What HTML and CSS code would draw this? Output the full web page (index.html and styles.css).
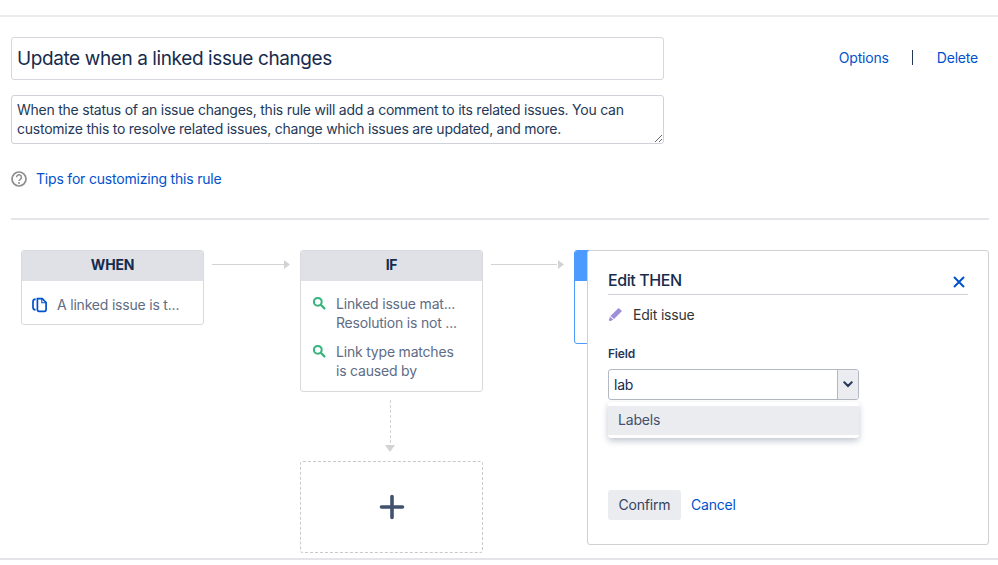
FILE: index.html
```html
<!DOCTYPE html>
<html lang="en">
<head>
<meta charset="utf-8">
<title>Update when a linked issue changes</title>
<link rel="stylesheet" href="styles.css">
</head>
<body>
<header class="head">
  <div class="head-fields">
    <input class="title-input" value="Update when a linked issue changes" readonly>
    <textarea class="desc-input" readonly>When the status of an issue changes, this rule will add a comment to its related issues. You can customize this to resolve related issues, change which issues are updated, and more.</textarea>
  </div>
  <nav class="head-actions">
    <a class="link">Options</a>
    <span class="sep"></span>
    <a class="link">Delete</a>
  </nav>
</header>
<div class="tips">
  <svg class="tips-icon" width="16" height="16" viewBox="0 0 16 16"><circle cx="8" cy="8" r="7" fill="none" stroke="#8d8d8d" stroke-width="1.7"/><path d="M5.6 6.3a2.4 2.4 0 1 1 3.7 2c-.9.6-1.3 1-1.3 1.8" fill="none" stroke="#8d8d8d" stroke-width="1.5"/><circle cx="8" cy="12" r="1" fill="#8d8d8d"/></svg>
  <a class="link">Tips for customizing this rule</a>
</div>
<main class="canvas">
  <section class="node node-when">
    <h3 class="node-head">WHEN</h3>
    <div class="node-row">
      <svg class="when-icon" width="16" height="16" viewBox="0 0 16 16"><path d="M3.6 2.2C2 2.4 1 3.2 1 4.6v5.8c0 1.4 1 2.2 2.6 2.4" fill="none" stroke="#0052cc" stroke-width="1.7"/><path d="M5.4 1.6h4.8l3.9 3.9v7.1c0 1-.7 1.7-1.7 1.7H7.1c-1 0-1.7-.7-1.7-1.7z" fill="none" stroke="#0052cc" stroke-width="1.7"/><path d="M9.8 1.4v4.3h4.4" fill="none" stroke="#0052cc" stroke-width="1.1"/></svg>
      <span>A linked issue is t...</span>
    </div>
  </section>
  <svg class="arrow arrow-a" width="80" height="10" viewBox="0 0 80 10"><path d="M0 4.5h72" stroke="#d3d3d3" stroke-width="1"/><path d="M72 0l6 4.5-6 4.5z" fill="#d3d3d3"/></svg>
  <section class="node node-if">
    <h3 class="node-head">IF</h3>
    <div class="cond">
      <svg width="14" height="14" viewBox="0 0 14 14"><circle cx="5.8" cy="5.8" r="3.9" fill="none" stroke="#36b37e" stroke-width="2"/><path d="M8.8 8.8l3.6 3.6" stroke="#36b37e" stroke-width="2.2" stroke-linecap="round"/></svg>
      <p>Linked issue mat...<br>Resolution is not ...</p>
    </div>
    <div class="cond">
      <svg width="14" height="14" viewBox="0 0 14 14"><circle cx="5.8" cy="5.8" r="3.9" fill="none" stroke="#36b37e" stroke-width="2"/><path d="M8.8 8.8l3.6 3.6" stroke="#36b37e" stroke-width="2.2" stroke-linecap="round"/></svg>
      <p>Link type matches<br>is caused by</p>
    </div>
  </section>
  <svg class="arrow arrow-b" width="80" height="10" viewBox="0 0 80 10"><path d="M0 4.5h66" stroke="#d3d3d3" stroke-width="1"/><path d="M67 0l6 4.5-6 4.5z" fill="#d3d3d3"/></svg>
  <section class="node node-then"><div class="then-bar"></div></section>
  <svg class="arrow-down" width="12" height="54" viewBox="0 0 12 54"><path d="M5.5 0v44" stroke="#d3d3d3" stroke-width="1" stroke-dasharray="3 2"/><path d="M0 45h10l-5 7z" fill="#d3d3d3"/></svg>
  <button class="add-node"><svg width="26" height="26" viewBox="0 0 26 26"><path d="M13 2.5v21M2.5 13h21" stroke="#42526e" stroke-width="3.6" stroke-linecap="round"/></svg></button>
  <aside class="panel">
    <div class="panel-title">
      <h2>Edit THEN</h2>
      <svg class="close" width="12" height="12" viewBox="0 0 12 12"><path d="M1 1l10 10M11 1L1 11" stroke="#0052cc" stroke-width="2"/></svg>
    </div>
    <div class="panel-sub">
      <svg class="pencil" width="15" height="15" viewBox="0 0 15 15"><path d="M10.6.9l3.4 3-7.9 8.2-3.7-3.2z" fill="#9f8fdb"/><path d="M1.9 9.7l3.5 3-3 1.3c-.8.3-1.6-.4-1.4-1.2z" fill="#9f8fdb"/></svg>
      <span>Edit issue</span>
    </div>
    <label class="field-label">Field</label>
    <div class="select">
      <span class="select-value">lab</span>
      <span class="select-btn"><svg width="10" height="7" viewBox="0 0 10 7"><path d="M1.3 1.3L5 5l3.7-3.7" fill="none" stroke="#253858" stroke-width="2" stroke-linecap="round"/></svg></span>
      <div class="menu"><div class="menu-item">Labels</div></div>
    </div>
    <div class="panel-actions">
      <button class="btn">Confirm</button>
      <a class="link cancel">Cancel</a>
    </div>
  </aside>
</main>
<footer class="foot"></footer>
</body>
</html>
```
FILE: styles.css
```css
* { box-sizing: border-box; }
html, body { margin: 0; padding: 0; }
body {
  width: 998px;
  height: 565px;
  overflow: hidden;
  background: #fff;
  color: #172b4d;
  font-family: Inter, "Liberation Sans", sans-serif;
  font-size: 14px;
  letter-spacing: -.2px;
  line-height: 19px;
  padding-top: 15px;
}
.link { color: #0052cc; font-size: 14px; }
.head {
  display: flex;
  justify-content: space-between;
  border-top: 2px solid #ebecf0;
  padding: 20px 20px 0 11px;
}
.head-fields { display: flex; flex-direction: column; gap: 15px; width: 653px; }
.title-input {
  display: block;
  width: 100%;
  height: 43px;
  padding: 0 5px 1px;
  border: 1.5px solid #d5d7de;
  border-radius: 3px;
  font: 19px/28px Inter, "Liberation Sans", sans-serif;
  letter-spacing: -.4px;
  color: #172b4d;
  outline: none;
}
.desc-input {
  display: block;
  width: 100%;
  height: 49px;
  padding: 4px 5px;
  border: 1.5px solid #cfd1dc;
  border-radius: 3px;
  font: 14px/19px Inter, "Liberation Sans", sans-serif;
  letter-spacing: -.24px;
  color: #253858;
  outline: none;
  resize: vertical;
  overflow: hidden;
}
.head-actions { display: flex; align-items: center; gap: 23px; height: 24px; margin-top: 8px; }
.sep { width: 1px; height: 15px; margin-right: 1px; background: #253858; }
.tips { display: flex; align-items: center; gap: 9px; margin: 25px 0 0 11px; height: 19px; }
.canvas {
  position: relative;
  height: 340px;
  margin: 30px 9px 0 11px;
  border-top: 2px solid #e4e5e8;
}
.node {
  position: absolute;
  width: 183px;
  background: #fff;
  border: 1px solid #d9dadd;
  border-radius: 3px;
  overflow: hidden;
}
.node-when { left: 10px; top: 30px; height: 75px; }
.node-if { left: 289px; top: 30px; height: 142px; }
.node-then { left: 563px; top: 30px; height: 94px; width: 40px; border-color: #4c9aff; }
.then-bar { height: 30px; background: #4c9aff; }
.node-head {
  margin: 0;
  height: 30px;
  background: #dfe1e6;
  text-align: center;
  font-size: 14px;
  font-weight: 700;
  line-height: 28px;
  color: #172b4d;
}
.node-row { display: flex; align-items: center; gap: 9px; padding: 3px 10px 0; color: #5e6c84; height: 44px; }
.when-icon { flex: none; }
.cond { display: flex; gap: 10px; padding: 13px 11px 0 11px; color: #5e6c84; }
.cond + .cond { padding-top: 10px; }
.cond svg { flex: none; margin-top: 2px; }
.cond p { margin: 0; }
.arrow { position: absolute; top: 40px; }
.arrow-a { left: 201px; }
.arrow-b { left: 480px; }
.arrow-down { position: absolute; left: 374px; top: 180px; }
.add-node {
  position: absolute;
  left: 289px;
  top: 241px;
  width: 183px;
  height: 92px;
  background: #fff;
  border: 1px dashed #c9c9c9;
  border-radius: 3px;
  padding: 0;
  display: flex;
  align-items: center;
  justify-content: center;
}
.panel {
  position: absolute;
  left: 576px;
  top: 30px;
  width: 402px;
  height: 295px;
  background: #fff;
  border: 1px solid #d0d0d0;
  border-radius: 3px;
  padding: 20px 20px 0;
  display: flex;
  flex-direction: column;
}
.panel-title {
  display: flex;
  align-items: flex-end;
  justify-content: space-between;
  height: 24px;
  border-bottom: 1px solid #cfd1d6;
  width: 360px;
}
.panel-title h2 { margin: 0; font-size: 16px; font-weight: 500; line-height: 22px; padding-bottom: 3px; letter-spacing: -.4px; color: #172b4d; }
.close { margin: 0 3px 0 0; position: relative; top: -6px; }
.panel-sub { display: flex; align-items: center; gap: 10px; height: 19px; margin-top: 10px; color: #333; }
.pencil { flex: none; }
.field-label { margin-top: 22px; font-size: 12px; font-weight: 600; line-height: 16px; color: #253858; }
.select {
  position: relative;
  display: flex;
  width: 251px;
  height: 31px;
  margin-top: 7px;
  border: 1px solid #b3b8c3;
  border-radius: 3px;
}
.select-value { flex: 1; padding: 0 5px; line-height: 29px; color: #172b4d; }
.select-btn {
  width: 21px;
  background: #ebecf0;
  border-left: 1px solid #b3b8c3;
  display: flex;
  align-items: center;
  justify-content: center;
  border-radius: 0 2px 2px 0;
}
.menu {
  position: absolute;
  left: -1px;
  top: 32px;
  width: 251px;
  padding: 4px 0 3px;
  background: #fff;
  border-radius: 3px;
  box-shadow: 0 3px 6px rgba(9, 30, 66, .25);
}
.menu-item { height: 29px; padding: 0 10px; line-height: 27px; background: #ebecf0; color: #42526e; }
.panel-actions { display: flex; align-items: center; gap: 10px; margin-top: 90px; }
.btn {
  width: 73px;
  height: 30px;
  border: 0;
  border-radius: 3px;
  background: #ebecf0;
  color: #344563;
  font: 14px Inter, "Liberation Sans", sans-serif;
  letter-spacing: -.2px;
  padding: 0 0 2px;
}
.cancel { margin-bottom: 2px; }
.foot { position: absolute; left: 0; top: 558px; width: 998px; border-top: 2px solid #e4e5e8; }
```
